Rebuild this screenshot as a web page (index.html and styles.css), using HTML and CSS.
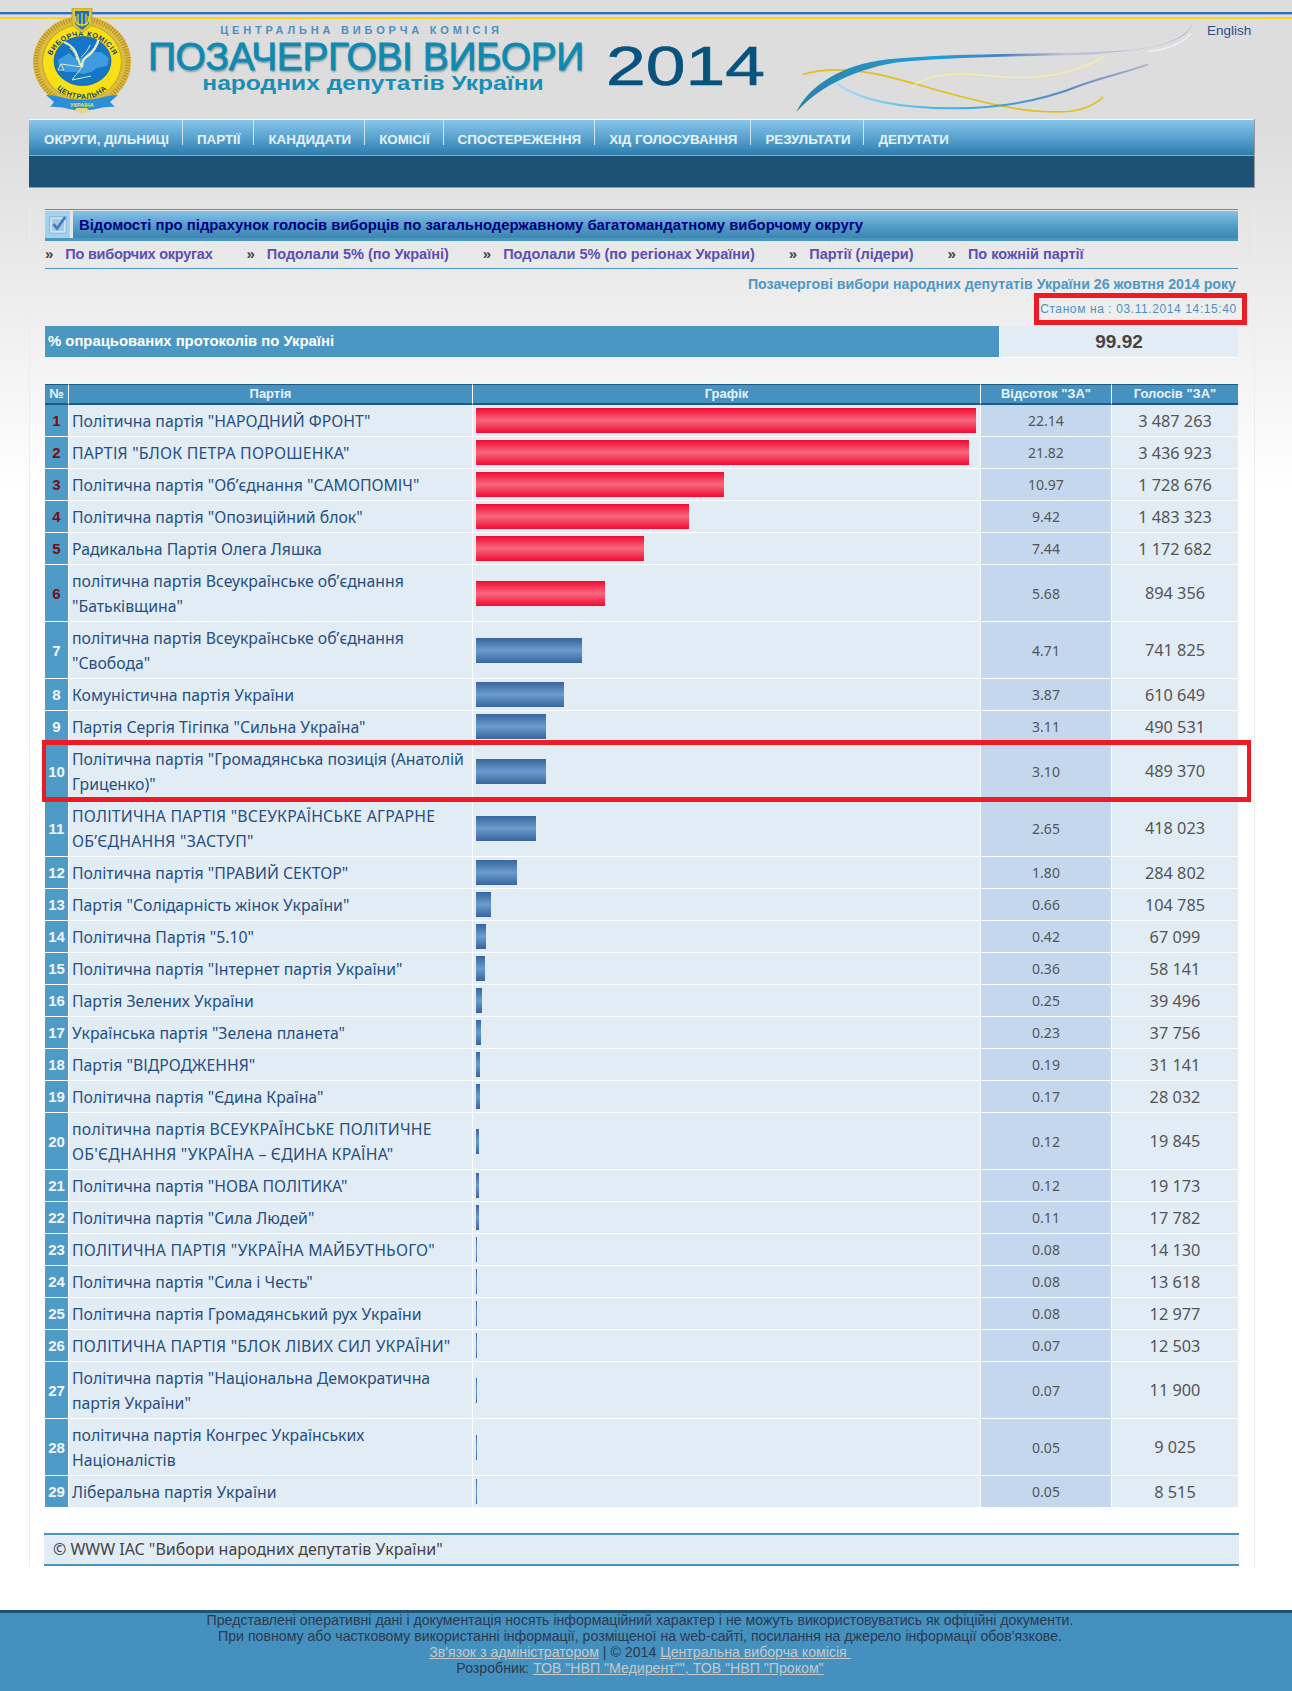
FILE: index.html
```html
<!DOCTYPE html>
<html lang="uk">
<head>
<meta charset="utf-8">
<title>Позачергові вибори народних депутатів України 2014</title>
<link rel="stylesheet" href="styles.css">
</head>
<body>
<header class="masthead">
  <svg class="emblem" viewBox="7 8 100 106" width="100" height="106" aria-label="Герб">
    <defs>
      <path id="arcTop" d="M24 68 A33.500 32 0 0 1 91 68"/>
      <path id="arcBottom" d="M21 68 A36.500 37 0 0 0 93 68"/>
    </defs>
    <ellipse cx="57" cy="62" rx="49" ry="46" fill="#dcbc40"/>
    <ellipse cx="57" cy="62" rx="46" ry="43" fill="none" stroke="#b8922a" stroke-width="5" stroke-dasharray="1.2 1.6"/>
    <ellipse cx="57" cy="62" rx="39.500" ry="37.500" fill="#f8e014" stroke="#b89a24" stroke-width=".8"/>
    <ellipse cx="57.500" cy="61" rx="28.500" ry="24.500" fill="#1476c6" stroke="#0f4f90" stroke-width=".6"/>
    <path d="M33 60 L44 53 L50 58 L58 58 L64 52 L76 52 L84 58 L82 66 L72 68 L66 72 L58 74 L50 72 L40 72 L34 66 Z" fill="#3f9ce0"/>
    <path d="M39 42 C46 45 51 50 53 58 C54 62 55 65 57 67" fill="none" stroke="#e8edc0" stroke-width="2"/>
    <path d="M74 38 C72 48 66 54 60 58 C58 60 57 63 57 67" fill="none" stroke="#e8edc0" stroke-width="2.400"/>
    <path d="M65 45 C63 50 60 54 56 57 M45 48 C49 51 51 55 52 60" fill="none" stroke="#e8edc0" stroke-width="1"/>
    <path d="M57 67 C54 72 50 75 47 80 L66 76 M57 67 L36 64 M36 64 L33 70 H39 Z" fill="none" stroke="#dfe8c0" stroke-width="1"/>
    <text class="emblem-text"><textPath href="#arcTop" startOffset="50%" text-anchor="middle">ВИБОРЧА      КОМІСІЯ</textPath></text>
    <text class="emblem-text"><textPath href="#arcBottom" startOffset="50%" text-anchor="middle">ЦЕНТРАЛЬНА</textPath></text>
    <path d="M47 8 H67 V25 L57 33 L47 25 Z" fill="#e0c23a" stroke="#a88a20" stroke-width=".6"/>
    <path d="M50 11 H64 V24 L57 30 L50 24 Z" fill="#1b6fc0"/>
    <path d="M57 13 V27 M53 14 V23 C53 25 55 25 57 25 C59 25 61 25 61 23 V14 M51 16 C50 21 51 24 54 25 M63 16 C64 21 63 24 60 25" fill="none" stroke="#f6de1c" stroke-width="1.200"/>
    <path d="M21 95 C32 95 42 100 57 100 C72 100 82 95 93 95 L85 102 L90 107 C78 106 72 110 57 111 C44 110 36 106 25 107 L29 102 Z" fill="#2b8fd6"/>
    <path d="M49 111 L57 114 L65 111 L62 108 H52 Z" fill="#e8d48a"/>
    <text class="ribbon-text" x="57" y="107" text-anchor="middle">УКРАЇНА</text>
  </svg>
  <div class="brand">
    <div class="brand-org">ЦЕНТРАЛЬНА ВИБОРЧА КОМІСІЯ</div>
    <div class="brand-title">ПОЗАЧЕРГОВІ ВИБОРИ</div>
    <div class="brand-sub">народних депутатів України</div>
  </div>
  <div class="year">2014</div>
  <svg class="swoosh" viewBox="0 0 1215 300" width="405" height="100" aria-hidden="true">
    <defs>
      <linearGradient id="swMain" x1="0" x2="1" y1="0" y2="0">
        <stop offset="0" stop-color="#2b82ac"/>
        <stop offset=".2" stop-color="#2a90c0"/>
        <stop offset=".35" stop-color="#18a0de"/>
        <stop offset=".52" stop-color="#4a80c4"/>
        <stop offset=".68" stop-color="#c4c4d8"/>
        <stop offset=".85" stop-color="#aab8d8"/>
        <stop offset="1" stop-color="#a0a4cc"/>
      </linearGradient>
      <linearGradient id="swLow" x1="0" x2="1" y1="0" y2="0">
        <stop offset="0" stop-color="#a8def8"/>
        <stop offset=".3" stop-color="#4cb4ea"/>
        <stop offset=".55" stop-color="#38a0dc"/>
        <stop offset=".75" stop-color="#6088c0"/>
        <stop offset="1" stop-color="#b0b0d2"/>
      </linearGradient>
    </defs>
    <path d="M45 178 C110 160 200 160 300 185 C420 215 520 250 640 272 C720 290 840 302 900 275 C920 266 935 258 945 245" fill="none" stroke="#e2bf20" stroke-width="5"/>
    <path d="M370 220 C410 175 500 172 600 182 C700 195 850 190 950 122" fill="none" stroke="#f8eeaa" stroke-width="4"/>
    <path d="M145 205 C220 260 350 280 500 280 C650 280 780 250 880 210 C950 185 1020 170 1080 148" fill="none" stroke="url(#swLow)" stroke-width="6"/>
    <path d="M25 292 C60 215 160 148 300 133 C480 115 700 118 900 112 C1050 108 1180 95 1215 25 C1195 82 1100 104 900 119 C700 124 480 125 320 143 C190 165 80 225 25 292 Z" fill="url(#swMain)"/>
    <path d="M1210 55 C1180 90 1130 104 1080 110" fill="none" stroke="#f4f4f8" stroke-width="4"/>
  </svg>
  <a class="lang" href="#">English</a>
</header>

<div class="page">
  <nav class="mainnav">
    <ul class="menu">
      <li><a href="#">ОКРУГИ, ДІЛЬНИЦІ</a></li>
      <li><a href="#">ПАРТІЇ</a></li>
      <li><a href="#">КАНДИДАТИ</a></li>
      <li><a href="#">КОМІСІЇ</a></li>
      <li><a href="#">СПОСТЕРЕЖЕННЯ</a></li>
      <li><a href="#">ХІД ГОЛОСУВАННЯ</a></li>
      <li><a href="#">РЕЗУЛЬТАТИ</a></li>
      <li><a href="#">ДЕПУТАТИ</a></li>
    </ul>
    <div class="subband"></div>
  </nav>

  <main class="panel">
    <h1 class="titlebar">
      <span class="titleicon">
        <svg viewBox="0 0 20 20" width="18" height="18" aria-hidden="true">
          <rect x="1" y="1" width="18" height="18" fill="#e4f0fa" stroke="#7aa8d0"/>
          <rect x="3" y="3" width="14" height="14" fill="#a4c8e8"/>
          <path d="M5 9 L9 14 L18 1" fill="none" stroke="#3f7dbb" stroke-width="3"/>
        </svg>
      </span>
      <span class="titletext">Відомості про підрахунок голосів виборців по загальнодержавному багатомандатному виборчому округу</span>
    </h1>
    <ul class="subnav">
      <li><a href="#">По виборчих округах</a></li>
      <li><a href="#">Подолали 5% (по Україні)</a></li>
      <li><a href="#">Подолали 5% (по регіонах України)</a></li>
      <li><a href="#">Партії (лідери)</a></li>
      <li><a href="#">По кожній партії</a></li>
    </ul>
    <p class="election">Позачергові вибори народних депутатів України 26 жовтня 2014 року</p>
    <div class="stampline"><span class="stamp">Станом на : 03.11.2014 14:15:40</span></div>
    <div class="progress">
      <div class="progress-label">% опрацьованих протоколів по Україні</div>
      <div class="progress-value">99.92</div>
    </div>

    <div class="results-wrap">
      <table class="results">
        <colgroup><col class="c-num"><col class="c-party"><col class="c-chart"><col class="c-pct"><col class="c-votes"></colgroup>
        <thead>
          <tr><th>№</th><th>Партія</th><th>Графік</th><th>Відсоток "ЗА"</th><th>Голосів "ЗА"</th></tr>
        </thead>
        <tbody>
          <tr class="pass"><td class="num">1</td><td class="party">Політична партія "НАРОДНИЙ ФРОНТ"</td><td class="chart"><span class="bar" style="width:500px"></span></td><td class="pct">22.14</td><td class="votes">3 487 263</td></tr>
          <tr class="pass"><td class="num">2</td><td class="party caps">ПАРТІЯ "БЛОК ПЕТРА ПОРОШЕНКА"</td><td class="chart"><span class="bar" style="width:493px"></span></td><td class="pct">21.82</td><td class="votes">3 436 923</td></tr>
          <tr class="pass"><td class="num">3</td><td class="party">Політична партія "Об’єднання "САМОПОМІЧ"</td><td class="chart"><span class="bar" style="width:248px"></span></td><td class="pct">10.97</td><td class="votes">1 728 676</td></tr>
          <tr class="pass"><td class="num">4</td><td class="party">Політична партія "Опозиційний блок"</td><td class="chart"><span class="bar" style="width:213px"></span></td><td class="pct">9.42</td><td class="votes">1 483 323</td></tr>
          <tr class="pass"><td class="num">5</td><td class="party">Радикальна Партія Олега Ляшка</td><td class="chart"><span class="bar" style="width:168px"></span></td><td class="pct">7.44</td><td class="votes">1 172 682</td></tr>
          <tr class="pass"><td class="num">6</td><td class="party">політична партія Всеукраїнське об’єднання "Батьківщина"</td><td class="chart"><span class="bar" style="width:129px"></span></td><td class="pct">5.68</td><td class="votes">894 356</td></tr>
          <tr><td class="num">7</td><td class="party">політична партія Всеукраїнське об’єднання "Свобода"</td><td class="chart"><span class="bar" style="width:106px"></span></td><td class="pct">4.71</td><td class="votes">741 825</td></tr>
          <tr><td class="num">8</td><td class="party">Комуністична партія України</td><td class="chart"><span class="bar" style="width:88px"></span></td><td class="pct">3.87</td><td class="votes">610 649</td></tr>
          <tr><td class="num">9</td><td class="party">Партія Сергія Тігіпка "Сильна Україна"</td><td class="chart"><span class="bar" style="width:70px"></span></td><td class="pct">3.11</td><td class="votes">490 531</td></tr>
          <tr><td class="num">10</td><td class="party">Політична партія "Громадянська позиція (Анатолій Гриценко)"</td><td class="chart"><span class="bar" style="width:70px"></span></td><td class="pct">3.10</td><td class="votes">489 370</td></tr>
          <tr><td class="num">11</td><td class="party caps">ПОЛІТИЧНА ПАРТІЯ "ВСЕУКРАЇНСЬКЕ АГРАРНЕ ОБ’ЄДНАННЯ "ЗАСТУП"</td><td class="chart"><span class="bar" style="width:60px"></span></td><td class="pct">2.65</td><td class="votes">418 023</td></tr>
          <tr><td class="num">12</td><td class="party">Політична партія "ПРАВИЙ СЕКТОР"</td><td class="chart"><span class="bar" style="width:41px"></span></td><td class="pct">1.80</td><td class="votes">284 802</td></tr>
          <tr><td class="num">13</td><td class="party">Партія "Солідарність жінок України"</td><td class="chart"><span class="bar" style="width:15px"></span></td><td class="pct">0.66</td><td class="votes">104 785</td></tr>
          <tr><td class="num">14</td><td class="party">Політична Партія "5.10"</td><td class="chart"><span class="bar" style="width:10px"></span></td><td class="pct">0.42</td><td class="votes">67 099</td></tr>
          <tr><td class="num">15</td><td class="party">Політична партія "Інтернет партія України"</td><td class="chart"><span class="bar" style="width:9px"></span></td><td class="pct">0.36</td><td class="votes">58 141</td></tr>
          <tr><td class="num">16</td><td class="party">Партія Зелених України</td><td class="chart"><span class="bar" style="width:6px"></span></td><td class="pct">0.25</td><td class="votes">39 496</td></tr>
          <tr><td class="num">17</td><td class="party">Українська партія "Зелена планета"</td><td class="chart"><span class="bar" style="width:5px"></span></td><td class="pct">0.23</td><td class="votes">37 756</td></tr>
          <tr><td class="num">18</td><td class="party">Партія "ВІДРОДЖЕННЯ"</td><td class="chart"><span class="bar" style="width:4px"></span></td><td class="pct">0.19</td><td class="votes">31 141</td></tr>
          <tr><td class="num">19</td><td class="party">Політична партія "Єдина Країна"</td><td class="chart"><span class="bar" style="width:4px"></span></td><td class="pct">0.17</td><td class="votes">28 032</td></tr>
          <tr><td class="num">20</td><td class="party caps">політична партія ВСЕУКРАЇНСЬКЕ ПОЛІТИЧНЕ ОБ'ЄДНАННЯ "УКРАЇНА – ЄДИНА КРАЇНА"</td><td class="chart"><span class="bar" style="width:3px"></span></td><td class="pct">0.12</td><td class="votes">19 845</td></tr>
          <tr><td class="num">21</td><td class="party">Політична партія "НОВА ПОЛІТИКА"</td><td class="chart"><span class="bar" style="width:3px"></span></td><td class="pct">0.12</td><td class="votes">19 173</td></tr>
          <tr><td class="num">22</td><td class="party">Політична партія "Сила Людей"</td><td class="chart"><span class="bar" style="width:3px"></span></td><td class="pct">0.11</td><td class="votes">17 782</td></tr>
          <tr><td class="num">23</td><td class="party caps">ПОЛІТИЧНА ПАРТІЯ "УКРАЇНА МАЙБУТНЬОГО"</td><td class="chart"><span class="bar" style="width:1px"></span></td><td class="pct">0.08</td><td class="votes">14 130</td></tr>
          <tr><td class="num">24</td><td class="party">Політична партія "Сила і Честь"</td><td class="chart"><span class="bar" style="width:1px"></span></td><td class="pct">0.08</td><td class="votes">13 618</td></tr>
          <tr><td class="num">25</td><td class="party">Політична партія Громадянський рух України</td><td class="chart"><span class="bar" style="width:1px"></span></td><td class="pct">0.08</td><td class="votes">12 977</td></tr>
          <tr><td class="num">26</td><td class="party caps">ПОЛІТИЧНА ПАРТІЯ "БЛОК ЛІВИХ СИЛ УКРАЇНИ"</td><td class="chart"><span class="bar" style="width:1px"></span></td><td class="pct">0.07</td><td class="votes">12 503</td></tr>
          <tr><td class="num">27</td><td class="party">Політична партія "Національна Демократична партія України"</td><td class="chart"><span class="bar" style="width:1px"></span></td><td class="pct">0.07</td><td class="votes">11 900</td></tr>
          <tr><td class="num">28</td><td class="party">політична партія Конгрес Українських Націоналістів</td><td class="chart"><span class="bar" style="width:1px"></span></td><td class="pct">0.05</td><td class="votes">9 025</td></tr>
          <tr><td class="num">29</td><td class="party">Ліберальна партія України</td><td class="chart"><span class="bar" style="width:1px"></span></td><td class="pct">0.05</td><td class="votes">8 515</td></tr>
        </tbody>
      </table>
      <div class="row-mark"></div>
    </div>

    <div class="copyright">© WWW IAC "Вибори народних депутатів України"</div>
  </main>
</div>

<footer class="sitefoot">
  <p>Представлені оперативні дані і документація носять інформаційний характер і не можуть використовуватись як офіційні документи.</p>
  <p>При повному або частковому використанні інформації, розміщеної на web-сайті, посилання на джерело інформації обов'язкове.</p>
  <p><a href="#">Зв'язок з адміністратором</a> | © 2014 <a href="#">Центральна виборча комісія&nbsp;</a></p>
  <p>Розробник: <a href="#">ТОВ "НВП "Медирент"", ТОВ "НВП "Проком"</a></p>
</footer>
</body>
</html>
```
FILE: styles.css
```css
* { box-sizing: border-box; }
html, body { margin: 0; padding: 0; }
body {
  font-family: "Liberation Sans", Arial, sans-serif;
  background: #fff linear-gradient(#dddddd 0, #dddddd 130px, #ffffff 490px) no-repeat 0 0 / 100% 490px;
  color: #444;
}
a { color: inherit; }

/* masthead */
.masthead {
  display: flex;
  align-items: flex-start;
  height: 119px;
  padding-left: 32px;
  background:
    linear-gradient(#2e6cbc 0 2px, #9ab4d6 2px 3px) no-repeat 0 12px / 100% 3px,
    linear-gradient(#f6d526, #f6d526) no-repeat 0 17px / 100% 2px;
}
.emblem { flex: none; margin-top: 8px; }
.emblem-text { font: bold 7.2px "Liberation Sans", sans-serif; fill: #14406e; letter-spacing: .6px; }
.ribbon-text { font: bold 5.5px "Liberation Sans", sans-serif; fill: #f6e45a; }
.brand { flex: none; width: 434px; margin-left: 16px; padding-top: 23px; text-align: center; }
.brand-org { font-size: 11px; font-weight: bold; line-height: 14px; letter-spacing: 3.8px; padding-right: 7px; color: #4f8fbc; }
.brand-title { font-size: 39px; line-height: 28px; margin-top: 6px; color: #0e8ab2; white-space: nowrap; text-shadow: 1px 2px 2px #8a9aa4; -webkit-text-stroke: .8px #0e8ab2; letter-spacing: -.42px; }
.brand-sub { font-size: 20.5px; font-weight: bold; line-height: 20px; margin-top: 2px; color: #1a8fb6; white-space: nowrap; transform: translateX(8px) scaleX(1.2); }
.year { flex: none; width: 155px; margin: 34px 0 0 24px; font-size: 55px; line-height: 64px; color: #08527e; -webkit-text-stroke: .6px #08527e; transform: scaleX(1.3); transform-origin: 0 50%; }
.swoosh { flex: none; margin: 15px 0 0 27px; }
.lang { flex: none; margin: 23px 0 0 14px; font-size: 13.5px; line-height: 16px; color: #2f4d86; text-decoration: none; }

/* page column */
.page { width: 1226px; margin-left: 29px; }
.mainnav { border-right: 1px solid #999; border-bottom: 1px solid #999; }
.menu {
  display: flex;
  margin: 0;
  padding: 0;
  list-style: none;
  height: 37px;
  border-top: 1px solid #f4f8fb;
  border-bottom: 1px solid #7ab2d6;
  background: linear-gradient(#86c5eb, #5aa2cf 50%, #2e7dac);
}
.menu li { height: 25px; border-right: 1px solid #cfe3f0; }
.menu li:last-child { border-right: 0; }
.menu a {
  display: block;
  padding: 12px 13px 0 14px;
  font-size: 13.35px;
  font-weight: bold;
  line-height: 16px;
  color: #e6f2fa;
  text-decoration: none;
  white-space: nowrap;
}
.menu li:first-child a { padding-left: 15px; }
.subband { height: 31px; background: #1c5274; }

/* panel */
.panel {
  margin-top: 21px;
  height: 1358px;
  padding: 0 16px 0 15px;
  border-left: 1px solid #ececec;
  border-right: 1px solid #ececec;
}
.titlebar {
  display: flex;
  height: 32px;
  margin: 0;
  padding: 1px 0 0;
  border-top: 1px solid #4e93bd;
  border-bottom: 3px solid #4b97c4;
  font-size: 14.85px;
  line-height: 28px;
}
.titleicon { display: flex; align-items: center; justify-content: center; flex: none; width: 25px; height: 27px; background: #a2d2f0; margin-right: 3px; }
.titletext { flex: 1; height: 27px; padding-left: 6px; background: linear-gradient(#84c2e7, #529ac6 60%, #3d86b2); color: #00007f; white-space: nowrap; }
.subnav {
  display: flex;
  margin: 0;
  padding: 0;
  list-style: none;
  height: 28px;
  border-bottom: 1px solid #4e97c2;
  font-size: 14.5px;
  font-weight: bold;
  line-height: 26px;
}
.subnav li { margin-right: 34px; white-space: nowrap; }
.subnav li:first-child a { letter-spacing: -.25px; }
.subnav li::before { content: "»"; margin-right: 12px; color: #444; font-size: 15px; }
.subnav a { color: #5a4fb4; text-decoration: none; }
.election { margin: 0; height: 24px; padding: 6px 2px 0 0; text-align: right; font-size: 14.2px; font-weight: bold; line-height: 18px; color: #4e97c6; white-space: nowrap; }
.stampline { display: flex; justify-content: flex-end; margin-right: -9px; }
.stamp { display: block; width: 213px; height: 32px; border: 5px solid #ed1c24; padding-right: 4px; text-align: center; font-size: 12px; line-height: 23px; letter-spacing: .6px; color: #4e90be; white-space: nowrap; }
.progress { display: flex; height: 32px; margin-top: 1px; border-bottom: 1px solid #fff; }
.progress-label { width: 954px; padding-left: 3px; background: #4a97c3; color: #fff; font-size: 14.85px; font-weight: bold; line-height: 31px; }
.progress-value { flex: 1; margin-left: 1px; background: #e2ecf5; font-size: 19px; font-weight: bold; line-height: 32px; text-align: center; color: #444; }

/* results table */
.results-wrap { position: relative; margin-top: 26px; }
.results { width: 1193px; table-layout: fixed; border-collapse: separate; border-spacing: 0; }
.c-num { width: 24px; }
.c-party { width: 404px; }
.c-chart { width: 508px; }
.c-pct { width: 131px; }
.c-votes { width: 126px; }
.results th {
  height: 21px;
  padding: 0;
  background: #4691bf;
  border-top: 1px solid #1d5b82;
  border-bottom: 2px solid #1d5b82;
  border-right: 1px solid #fff;
  color: #eaf3f9;
  font-size: 13px;
  font-weight: bold;
  line-height: 16px;
  text-align: center;
}
.results th:last-child { border-right: 0; }
.results td {
  padding: 3px;
  height: 32px;
  border-bottom: 1px solid #fff;
  border-right: 1px solid #fff;
  background: #e2ecf5;
  vertical-align: middle;
}
.results td:last-child { border-right: 0; }
.results td.num { padding: 0; background: #4f9bc8; color: #f0f6fb; font-size: 15px; font-weight: bold; text-align: center; }
.results tr.pass td.num { color: #7a0c14; }
.results td.party { padding: 4px 3px 2px; font-family: "Noto Sans", sans-serif; font-size: 15.8px; line-height: 25px; color: #264f82; }
.results td.party.caps { letter-spacing: .22px; }
.results td.pct { background: #c5d7ec; text-align: center; font-family: "Noto Sans", sans-serif; font-size: 14px; color: #555; }
.results td.votes { text-align: center; font-family: "Noto Sans", sans-serif; font-size: 16.3px; color: #555; }
.bar { display: block; height: 25px; background: linear-gradient(#37659d, #6c9ccd 50%, #37659d); }
.pass .bar { background: linear-gradient(#f00a32, #f8687f 50%, #f00a32); }
.row-mark { position: absolute; left: -3px; top: 356px; width: 1209px; height: 62px; border: solid #ed1c24; border-width: 5px 4px; }

.copyright {
  margin: 25px -1px 0;
  height: 33px;
  padding-left: 9px;
  border-top: 2px solid #4b93bf;
  border-bottom: 2px solid #4b93bf;
  background: #e2ecf5;
  font-family: "Noto Sans", sans-serif;
  font-size: 16px;
  line-height: 29px;
  color: #444;
}

/* footer */
.sitefoot {
  margin-top: 43px;
  height: 82px;
  padding-right: 12px;
  border-top: 3px solid #1c5274;
  background: #4490be;
  text-align: center;
  font-size: 14.15px;
  line-height: 16px;
  color: #2b3a4e;
}
.sitefoot p { margin: 0; position: relative; top: -1px; }
.sitefoot a { color: #c6c8c8; }
```
